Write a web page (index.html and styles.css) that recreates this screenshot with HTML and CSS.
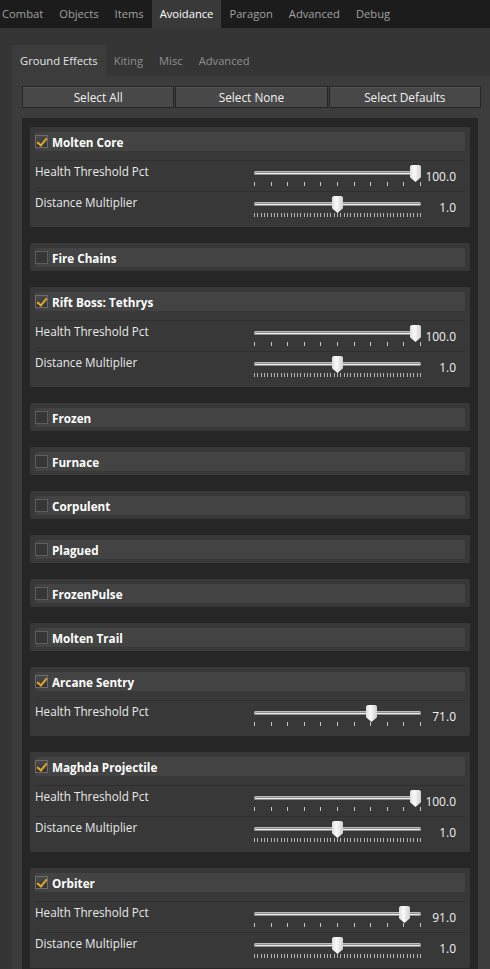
FILE: index.html
```html
<!doctype html>
<html>
<head>
<meta charset="utf-8">
<title>Avoidance</title>
<link rel="stylesheet" href="styles.css">
</head>
<body>
<div class="topbar">
	<span class="tab first">Combat</span>
	<span class="tab">Objects</span>
	<span class="tab">Items</span>
	<span class="tab on">Avoidance</span>
	<span class="tab">Paragon</span>
	<span class="tab">Advanced</span>
	<span class="tab">Debug</span>
</div>
<div class="wrap">
	<div class="subtabs">
		<span class="stab on">Ground Effects</span>
		<span class="stab">Kiting</span>
		<span class="stab">Misc</span>
		<span class="stab">Advanced</span>
	</div>
	<div class="panel">
		<div class="btns">
			<button>Select All</button>
			<button>Select None</button>
			<button>Select Defaults</button>
		</div>
		<div class="list">

			<div class="item">
				<div class="head"><i class="cb on"></i>Molten Core</div>
				<div class="rows">
					<div class="row">
						<span class="lbl">Health Threshold Pct</span>
						<div class="slider"><div class="track"></div><div class="ticks t10"></div><i class="thumb" style="left:157px"></i></div>
						<span class="val">100.0</span>
					</div>
					<div class="row">
						<span class="lbl">Distance Multiplier</span>
						<div class="slider"><div class="track"></div><div class="ticks t50"></div><i class="thumb" style="left:79px"></i></div>
						<span class="val">1.0</span>
					</div>
				</div>
			</div>

			<div class="item">
				<div class="head"><i class="cb"></i>Fire Chains</div>
			</div>

			<div class="item">
				<div class="head"><i class="cb on"></i>Rift Boss: Tethrys</div>
				<div class="rows">
					<div class="row">
						<span class="lbl">Health Threshold Pct</span>
						<div class="slider"><div class="track"></div><div class="ticks t10"></div><i class="thumb" style="left:157px"></i></div>
						<span class="val">100.0</span>
					</div>
					<div class="row">
						<span class="lbl">Distance Multiplier</span>
						<div class="slider"><div class="track"></div><div class="ticks t50"></div><i class="thumb" style="left:79px"></i></div>
						<span class="val">1.0</span>
					</div>
				</div>
			</div>

			<div class="item"><div class="head"><i class="cb"></i>Frozen</div></div>
			<div class="item"><div class="head"><i class="cb"></i>Furnace</div></div>
			<div class="item"><div class="head"><i class="cb"></i>Corpulent</div></div>
			<div class="item"><div class="head"><i class="cb"></i>Plagued</div></div>
			<div class="item"><div class="head"><i class="cb"></i>FrozenPulse</div></div>
			<div class="item"><div class="head"><i class="cb"></i>Molten Trail</div></div>

			<div class="item">
				<div class="head"><i class="cb on"></i>Arcane Sentry</div>
				<div class="rows">
					<div class="row">
						<span class="lbl">Health Threshold Pct</span>
						<div class="slider"><div class="track"></div><div class="ticks t10"></div><i class="thumb" style="left:113px"></i></div>
						<span class="val">71.0</span>
					</div>
				</div>
			</div>

			<div class="item">
				<div class="head"><i class="cb on"></i>Maghda Projectile</div>
				<div class="rows">
					<div class="row">
						<span class="lbl">Health Threshold Pct</span>
						<div class="slider"><div class="track"></div><div class="ticks t10"></div><i class="thumb" style="left:157px"></i></div>
						<span class="val">100.0</span>
					</div>
					<div class="row">
						<span class="lbl">Distance Multiplier</span>
						<div class="slider"><div class="track"></div><div class="ticks t50"></div><i class="thumb" style="left:79px"></i></div>
						<span class="val">1.0</span>
					</div>
				</div>
			</div>

			<div class="item">
				<div class="head"><i class="cb on"></i>Orbiter</div>
				<div class="rows">
					<div class="row">
						<span class="lbl">Health Threshold Pct</span>
						<div class="slider"><div class="track"></div><div class="ticks t10"></div><i class="thumb" style="left:146px"></i></div>
						<span class="val">91.0</span>
					</div>
					<div class="row">
						<span class="lbl">Distance Multiplier</span>
						<div class="slider"><div class="track"></div><div class="ticks t50"></div><i class="thumb" style="left:79px"></i></div>
						<span class="val">1.0</span>
					</div>
				</div>
			</div>

		</div>
	</div>
</div>
</body>
</html>
```

FILE: styles.css
```css
*{margin:0; padding:0; box-sizing:border-box;}
html,body{height:100%;}
body{
	background:#353535;
	font-family:"Open Sans","Noto Sans",sans-serif;
	font-size:11.5px;
	color:#e6e6e6;
	overflow:hidden;
}
.topbar{
	height:28px;
	background:#1c1c1c;
	display:flex;
	white-space:nowrap;
}
.tab{
	padding:0 8px;
	line-height:27px;
	color:#a0a0a0;
	font-size:11.2px;
}
.tab.first{padding-left:2px;}
.tab.on{
	background:#393939;
	color:#fff;
}
.wrap{
	padding:17px 0 0 12px;
}
.subtabs{
	display:flex;
	height:31px;
}
.stab{
	padding:0 8px;
	line-height:31px;
	color:#8e8e8e;
	font-size:11.2px;
}
.stab.on{
	background:#3c3c3c;
	color:#e4e4e4;
}
.panel{
	background:#3c3c3c;
	width:490px;
	padding:10px 0 0 10px;
	min-height:900px;
}
.btns{
	display:flex;
	width:459px;
	gap:1px;
}
.btns button{
	flex:1;
	height:22px;
	background:#484848;
	border:1px solid #262626;
	box-shadow:inset 0 1px 0 #555;
	color:#f0f0f0;
	font-family:inherit;
	font-size:11.8px;
}
.list{
	margin-top:10px;
	width:456px;
	background:#262626;
	padding:9px 8px;
}
.item{
	background:#383838;
	border-radius:2px;
	padding:5px 5px 4px;
	margin-bottom:16px;
}
.head{
	height:19px;
	background:#434343;
	border-radius:2px;
	display:flex;
	align-items:center;
	font-weight:bold;
	font-size:11.7px;
	color:#fff;
}
.cb{
	width:13px;
	height:13px;
	border:1px solid #5e5e5e;
	background:#363636;
	margin-right:4px;
	position:relative;
}
.cb.on{
	border-color:#6c6c6c;
	background:linear-gradient(#4a4a4a,#333);
}
.cb.on::after{
	content:"";
	position:absolute;
	left:3px;
	top:0;
	width:4px;
	height:8px;
	border:solid #e2a72a;
	border-width:0 2px 2px 0;
	transform:rotate(40deg);
}
.rows{
	margin-top:9px;
	padding-bottom:1px;
}
.row{
	display:flex;
	height:31px;
	padding-right:9px;
	border-top:1px solid #2f2f2f;
}
.lbl{
	flex:1;
	padding-top:2px;
	line-height:16px;
	font-size:11.7px;
	color:#e8e8e8;
}
.slider{
	width:167px;
	height:30px;
	position:relative;
}
.track{
	position:absolute;
	left:0;
	top:10px;
	width:167px;
	height:4px;
	border-radius:2px;
	background:#f0f0f0;
	box-shadow:0 0 0 1px #8a8a8a inset;
	border-top:1px solid #bdbdbd;
}
.ticks{
	position:absolute;
	left:0;
	top:21px;
	width:168px;
	height:4px;
}
.t10{
	background:repeating-linear-gradient(90deg,#c4c4c4 0,#c4c4c4 1px,transparent 1px,transparent 16.6px);
}
.t50{
	background:repeating-linear-gradient(90deg,#b4b4b4 0,#b4b4b4 1px,transparent 1px,transparent 3.32px);
}
.thumb{
	position:absolute;
	top:4px;
	width:11px;
	height:17px;
	margin-left:-1px;
	background:linear-gradient(90deg,#dcdcdc,#fafafa 40%,#d0d0d0);
	clip-path:polygon(0 8%,15% 0,85% 0,100% 8%,100% 72%,50% 100%,0 72%);
}
.val{
	width:35px;
	text-align:right;
	padding-top:8px;
	line-height:16px;
	font-size:12px;
	color:#f0f0f0;
}
```
